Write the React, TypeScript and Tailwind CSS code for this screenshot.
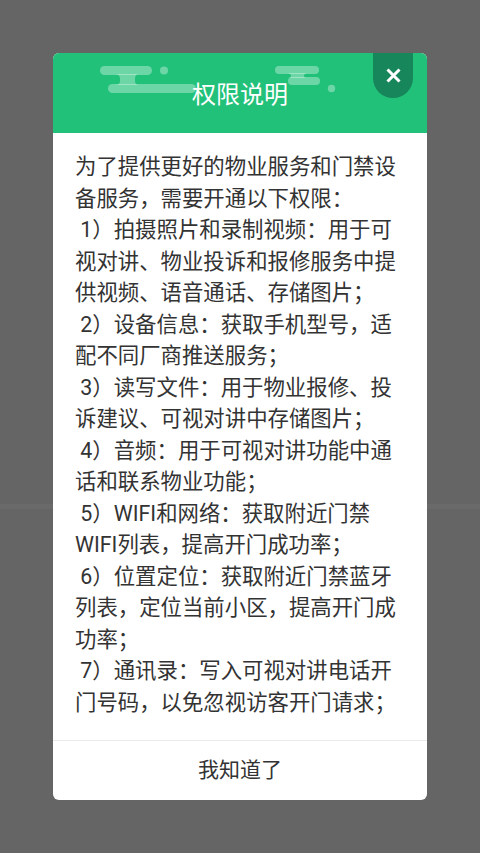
import React from 'react';

// 权限说明 dialog over a dimmed page

const lines = [
  '为了提供更好的物业服务和门禁设',
  '备服务，需要开通以下权限：',
  ' 1）拍摄照片和录制视频：用于可',
  '视对讲、物业投诉和报修服务中提',
  '供视频、语音通话、存储图片；',
  ' 2）设备信息：获取手机型号，适',
  '配不同厂商推送服务；',
  ' 3）读写文件：用于物业报修、投',
  '诉建议、可视对讲中存储图片；',
  ' 4）音频：用于可视对讲功能中通',
  '话和联系物业功能；',
  ' 5）WIFI和网络：获取附近门禁',
  'WIFI列表，提高开门成功率；',
  ' 6）位置定位：获取附近门禁蓝牙',
  '列表，定位当前小区，提高开门成',
  '功率；',
  ' 7）通讯录：写入可视对讲电话开',
  '门号码，以免忽视访客开门请求；',
];

const font = { fontFamily: 'Roboto, "Noto Sans CJK SC", sans-serif' };

function Clouds() {
  return (
    <svg className="absolute inset-0" width="374" height="80" viewBox="0 0 374 80">
      <g fill="#ffffff" fillOpacity="0.34">
        <rect x="47" y="13" width="52" height="9" rx="4.5" />
        <circle cx="111" cy="17.5" r="4" />
        <path d="M62 21 Q67 21 67 26 L67 28 Q67 32 62 32 L86 32 Q82 32 82 28 L82 26 Q82 21 86 21 Z" />
        <rect x="55" y="31" width="88" height="9" rx="4.5" />
        <rect x="222" y="13" width="44" height="8" rx="4" />
        <path d="M234 20 Q238 20 238 23 Q238 25 234 25 L255 25 Q251 25 251 23 Q251 20 255 20 Z" />
        <rect x="235" y="24" width="32" height="8" rx="4" />
        <circle cx="278.5" cy="35.5" r="3.7" />
      </g>
    </svg>
  );
}

export default function App() {
  return (
    <div className="relative w-[480px] h-[853px] overflow-hidden bg-[#656565]" style={font}>
      {/* dimmed page behind */}
      <div className="pt-[504px]">
        <div className="h-[5px] bg-[#6a6a6a]" />
      </div>

      {/* dialog */}
      <div className="absolute left-[53px] top-[53px] w-[374px] rounded-[6px] overflow-hidden bg-white">
        <div className="relative h-[80px] bg-[#22c17a] flex items-center justify-center pt-[3px]">
          <Clouds />
          <span className="relative text-[24px] leading-none text-white">权限说明</span>
          <button className="absolute top-0 right-[14px] w-[40px] h-[45px] rounded-b-[20px] bg-[#17865a] flex items-center justify-center">
            <svg width="15" height="15" viewBox="0 0 15 15">
              <path d="M1.5 1.5 L13.5 13.5 M13.5 1.5 L1.5 13.5" stroke="#ffffff" strokeWidth="3" strokeLinecap="butt" />
            </svg>
          </button>
        </div>

        <div className="pl-[22px] pr-[20px] pt-[18px] pb-[22px] text-[21.4px] leading-[31.5px] text-[#333333]">
          {lines.map((l, i) => (
            <div key={i} className="whitespace-pre">
              {l}
            </div>
          ))}
        </div>

        <div className="h-px bg-[#ebebeb]" />
        <div className="h-[59px] flex items-center justify-center text-[21px] text-[#333333]">
          我知道了
        </div>
      </div>
    </div>
  );
}
